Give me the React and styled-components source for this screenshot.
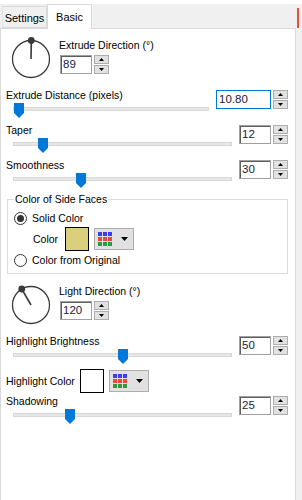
import React from 'react';
import styled, { createGlobalStyle } from 'styled-components';

const GlobalStyle = createGlobalStyle`
  html, body { margin: 0; padding: 0; background: #f0f0f0; }
  body { font-family: "Liberation Sans", Arial, sans-serif; }
`;

const Window = styled.div`
  width: 302px;
  height: 500px;
  background: #f0f0f0;
  display: flex;
  flex-direction: column;
  overflow: hidden;
  font-family: "Liberation Sans", Arial, sans-serif;
  font-size: 10.5px;
  color: #000;
`;

const TopStrip = styled.div`
  height: 4px;
  flex: none;
  background: #fff;
`;

const TabBar = styled.div`
  height: 24px;
  flex: none;
  display: flex;
  align-items: flex-end;
  padding-left: 2px;
  position: relative;
  z-index: 1;
`;

const Tab = styled.div`
  box-sizing: border-box;
  width: ${(p) => (p.$active ? 45 : 45)}px;
  height: ${(p) => (p.$active ? 25 : 22)}px;
  margin-bottom: ${(p) => (p.$active ? -1 : 0)}px;
  padding-top: ${(p) => (p.$active ? 0 : 2)}px;
  display: flex;
  align-items: center;
  justify-content: center;
  background: ${(p) => (p.$active ? '#fff' : '#f0f0f0')};
  border: 1px solid #d9d9d9;
  border-bottom: ${(p) => (p.$active ? 'none' : '1px solid #d9d9d9')};
  border-left: ${(p) => (p.$active ? '1px solid #d9d9d9' : '1px solid #e4e4e4')};
  font-size: 11px;
`;

const EdgeMark = styled.div`
  margin-left: auto;
  margin-right: 3px;
  align-self: stretch;
  margin-top: 4px;
  width: 2px;
  background: #e8503a;
`;

const Body = styled.div`
  flex: 1;
  display: flex;
  min-height: 0;
`;

const Panel = styled.div`
  box-sizing: border-box;
  width: 296px;
  flex: none;
  background: #fff;
  border: 1px solid #d9d9d9;
  border-bottom: none;
  padding: 0 7px 0 5px;
  display: flex;
  flex-direction: column;
`;

const DialRow = styled.div`
  display: flex;
  align-items: flex-start;
  padding-left: 5px;
  margin-top: ${(p) => p.$mt}px;
`;

const DialSvg = styled.svg`
  display: block;
  flex: none;
  overflow: visible;
`;

const DialControls = styled.div`
  display: flex;
  flex-direction: column;
  gap: 3px;
  margin-left: 8px;
`;

const Label = styled.div`
  line-height: 13px;
  white-space: nowrap;
  ${(p) => (p.$w ? `width: ${p.$w}px; flex: none;` : '')}
`;

const SpinBox = styled.div`
  display: flex;
  gap: 2px;
  margin-left: ${(p) => p.$ml || 0}px;
  ${(p) => (p.$grid ? 'grid-column: 2; grid-row: 1 / span 2; align-self: start; margin-top: 1px;' : '')}
`;

const Field = styled.div`
  box-sizing: border-box;
  width: ${(p) => p.$w}px;
  height: 19px;
  border: 1px solid ${(p) => (p.$focus ? '#0078d7' : '#a0a0a0')};
  box-shadow: ${(p) => (p.$focus ? 'none' : 'inset 1px 1px 0 #5e5e5e')};
  background: #fff;
  font-size: 11.5px;
  line-height: 17px;
  padding-left: 2px;
  color: #1a1a3a;
`;

const Spin = styled.div`
  display: flex;
  flex-direction: column;
  gap: 1px;
  width: 15px;
`;

const SpinBtn = styled.div`
  box-sizing: border-box;
  height: 9px;
  background: #e1e1e1;
  border: 1px solid #adadad;
  display: flex;
  align-items: center;
  justify-content: center;
`;

const SliderSection = styled.div`
  display: grid;
  grid-template-columns: 1fr auto;
  column-gap: 7px;
  margin-top: ${(p) => p.$mt}px;
`;

const Slider = styled.div`
  position: relative;
  height: 17px;
  margin-left: 7px;
  grid-column: 1;
  grid-row: 2;
`;

const Track = styled.div`
  box-sizing: border-box;
  height: 4px;
  margin-top: 5px;
  background: #e7e7e7;
  border: 1px solid #d6d6d6;
`;

const Thumb = styled.svg`
  position: absolute;
  top: 1px;
  display: block;
`;

const Group = styled.fieldset`
  margin: 4px 0 0 1px;
  padding: 5px 6px 6px 6px;
  border: 1px solid #dcdcdc;
  min-width: 0;
  display: flex;
  flex-direction: column;
`;

const Legend = styled.legend`
  padding: 0 1px;
  line-height: 13px;
`;

const RadioRow = styled.div`
  display: flex;
  align-items: center;
  gap: 5px;
  height: 14px;
  margin-top: ${(p) => p.$mt || 0}px;
`;

const RadioCircle = styled.div`
  box-sizing: border-box;
  width: 13px;
  height: 13px;
  border-radius: 50%;
  border: 1px solid #333;
  background: #fff;
  display: flex;
  align-items: center;
  justify-content: center;
  &::after {
    content: '';
    width: 7px;
    height: 7px;
    border-radius: 50%;
    background: ${(p) => (p.$checked ? '#333' : 'transparent')};
  }
`;

const ColorRow = styled.div`
  display: flex;
  align-items: center;
  height: 24px;
  padding-left: ${(p) => p.$pl || 0}px;
  margin-top: ${(p) => p.$mt || 0}px;
`;

const Swatch = styled.div`
  box-sizing: border-box;
  width: 24px;
  height: 24px;
  border: 1px solid #000;
  background: ${(p) => p.$color};
  flex: none;
`;

const ColorButton = styled.div`
  box-sizing: border-box;
  width: 40px;
  height: 22px;
  margin-left: 5px;
  background: #e1e1e1;
  border: 1px solid #adadad;
  display: flex;
  align-items: center;
  padding-left: 3px;
  gap: 9px;
`;

function Arrow({ up }) {
  return (
    <svg width="5" height="3" viewBox="0 0 5 3">
      <polygon points={up ? '0,3 5,3 2.5,0' : '0,0 5,0 2.5,3'} fill="#000" />
    </svg>
  );
}

function NumberInput({ value, w = 32, focus, grid, ml }) {
  return (
    <SpinBox $grid={grid} $ml={ml}>
      <Field $w={w} $focus={focus}>{value}</Field>
      <Spin>
        <SpinBtn><Arrow up /></SpinBtn>
        <SpinBtn><Arrow /></SpinBtn>
      </Spin>
    </SpinBox>
  );
}

function Dial({ angle }) {
  const r = 18.5;
  const cx = 20;
  const cy = 20;
  const a = (angle * Math.PI) / 180;
  const x = cx + r * Math.cos(a);
  const y = cy - r * Math.sin(a);
  return (
    <DialSvg width="40" height="40" viewBox="0 0 40 40">
      <circle cx={cx} cy={cy} r={r} fill="none" stroke="#3a3a3a" strokeWidth="1.3" />
      <line x1={x} y1={y} x2={cx} y2={cy} stroke="#3a3a3a" strokeWidth="1.6" />
      <circle cx={x} cy={y} r="3.4" fill="#3a3a3a" />
    </DialSvg>
  );
}

function SliderRow({ label, value, pct, w, focus, mt }) {
  return (
    <SliderSection $mt={mt}>
      <Label>{label}</Label>
      <Slider>
        <Track />
        <Thumb
          width="10"
          height="15"
          viewBox="0 0 10 15"
          style={{ left: `calc((100% - 10px) * ${pct})` }}
        >
          <polygon points="0,0 10,0 10,10 5,15 0,10" fill="#0078d7" />
        </Thumb>
      </Slider>
      <NumberInput value={value} w={w} focus={focus} grid />
    </SliderSection>
  );
}

function GridIcon() {
  const colors = ['#3c3cf2', '#ef4545', '#2b9b3d'];
  const cells = [];
  colors.forEach((c, r) => {
    [0, 1, 2].forEach((col) => {
      cells.push(<rect key={`${r}-${col}`} x={col * 5} y={r * 5} width="4" height="4" fill={c} />);
    });
  });
  return (
    <svg width="14" height="14" viewBox="0 0 14 14">
      {cells}
    </svg>
  );
}

function DropArrow() {
  return (
    <svg width="7" height="4" viewBox="0 0 7 4">
      <polygon points="0,0 7,0 3.5,4" fill="#000" />
    </svg>
  );
}

function ColorPicker({ color }) {
  return (
    <>
      <Swatch $color={color} />
      <ColorButton>
        <GridIcon />
        <DropArrow />
      </ColorButton>
    </>
  );
}

export default function App() {
  return (
    <>
      <GlobalStyle />
      <Window>
        <TopStrip />
        <TabBar>
          <Tab>Settings</Tab>
          <Tab $active>Basic</Tab>
          <EdgeMark />
        </TabBar>
        <Body>
          <Panel>
            <DialRow $mt={10}>
              <Dial angle={89} />
              <DialControls>
                <Label>Extrude Direction (°)</Label>
                <NumberInput value="89" ml={1} />
              </DialControls>
            </DialRow>

            <SliderRow mt={10} label="Extrude Distance (pixels)" value="10.80" w={55} focus pct={0.003} />
            <SliderRow mt={5} label="Taper" value="12" pct={0.12} />
            <SliderRow mt={5} label="Smoothness" value="30" pct={0.3} />

            <Group>
              <Legend>Color of Side Faces</Legend>
              <RadioRow>
                <RadioCircle $checked />
                <span>Solid Color</span>
              </RadioRow>
              <ColorRow $pl={19} $mt={2}>
                <Label $w={32}>Color</Label>
                <ColorPicker color="#d9cf7c" />
              </ColorRow>
              <RadioRow $mt={2}>
                <RadioCircle />
                <span>Color from Original</span>
              </RadioRow>
            </Group>

            <DialRow $mt={11}>
              <Dial angle={120} />
              <DialControls>
                <Label>Light Direction (°)</Label>
                <NumberInput value="120" ml={1} />
              </DialControls>
            </DialRow>

            <SliderRow mt={10} label="Highlight Brightness" value="50" pct={0.5} />

            <ColorRow $mt={4}>
              <Label $w={74}>Highlight Color</Label>
              <ColorPicker color="#ffffff" />
            </ColorRow>

            <SliderRow mt={2} label="Shadowing" value="25" pct={0.25} />
          </Panel>
        </Body>
      </Window>
    </>
  );
}
